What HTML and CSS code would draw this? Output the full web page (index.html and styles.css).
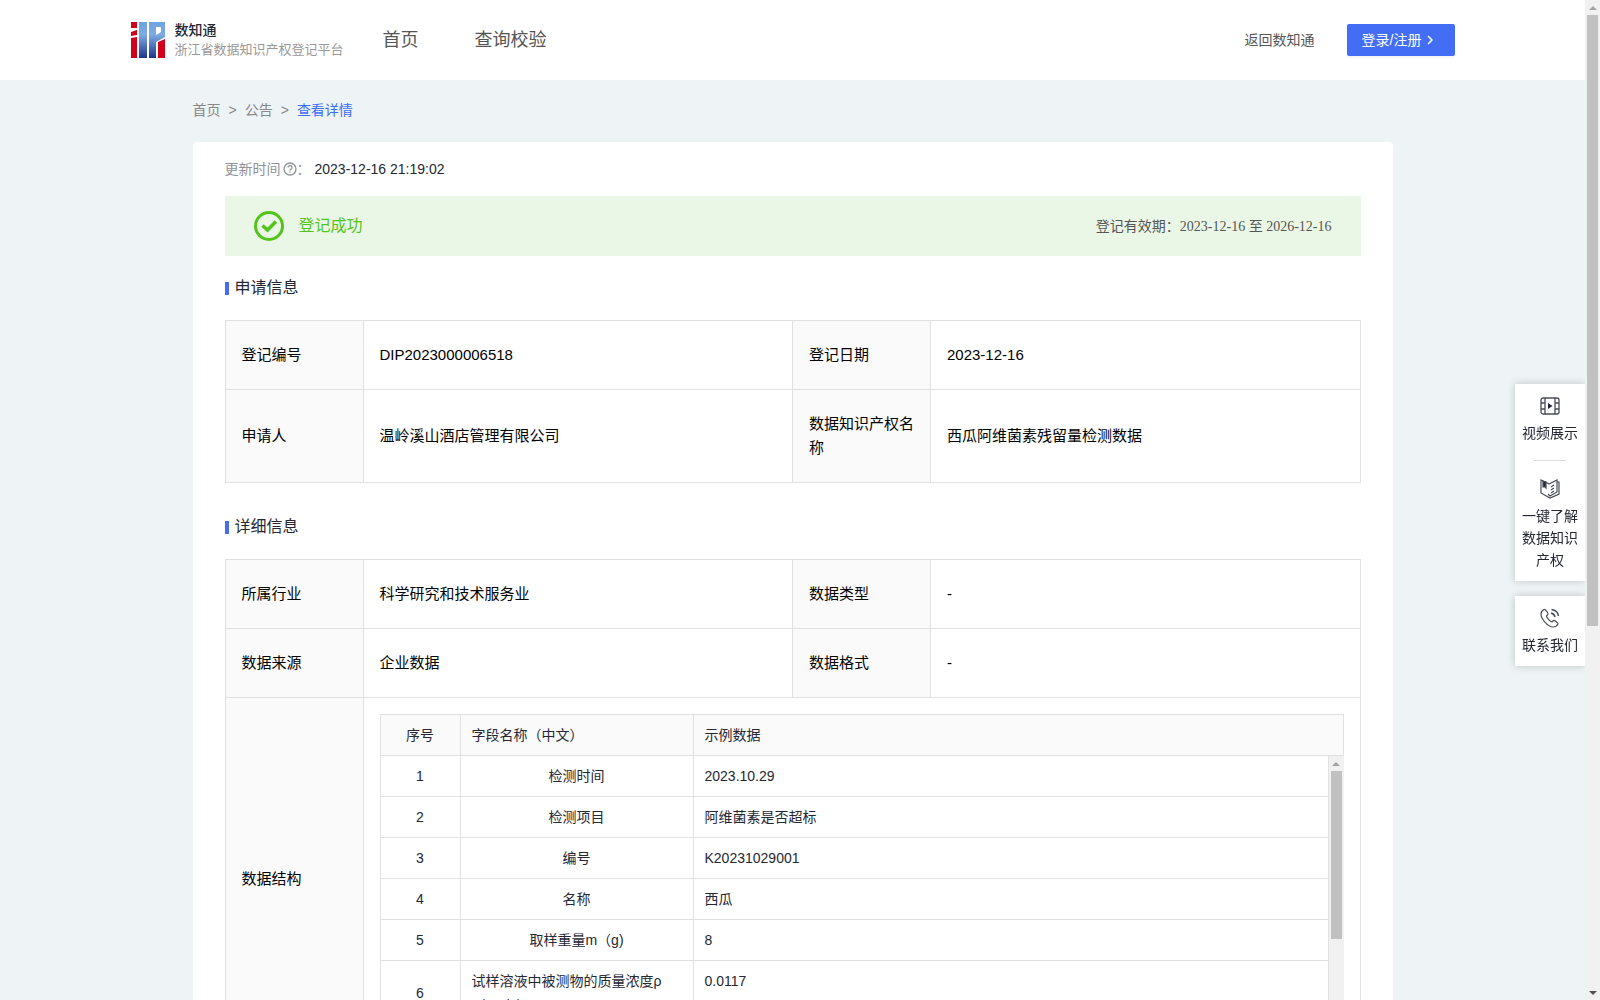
FILE: index.html
```html
<!DOCTYPE html>
<html lang="zh-CN">
<head>
  <meta charset="UTF-8">
  <title>浙江省数据知识产权登记平台</title>
  <link rel="stylesheet" href="styles.css">
</head>
<body>
  <!-- Header -->
  <header class="header">
    <div class="header-inner">
      <a class="logo" href="#">
        <svg width="34" height="36" viewBox="0 0 34 36">
          <defs>
            <linearGradient id="blue" x1="0" y1="0" x2="0" y2="1">
              <stop offset="0" stop-color="#6da3e0"/>
              <stop offset="0.35" stop-color="#7fabe2"/>
              <stop offset="1" stop-color="#1f3487"/>
            </linearGradient>
          </defs>
          <path fill="#d0021b" d="M0 0h6v6H0zM0 10l6-2v5l-6 1zM0 16l6-1v21H0zM34 17v19h-7V20z"/>
          <path fill="url(#blue)" fill-rule="evenodd" d="M8 0h8v36H8zM18 0h16v15l-9 5v16h-7zM25 5v8l5-3V5z"/>
        </svg>
        <span class="logo-text">
          <strong>数知通</strong>
          <small>浙江省数据知识产权登记平台</small>
        </span>
      </a>
      <nav class="nav">
        <a href="#">首页</a>
        <a href="#">查询校验</a>
      </nav>
      <a class="back" href="#">返回数知通</a>
      <button class="login" type="button">
        登录/注册
        <svg width="8" height="10" viewBox="0 0 8 10"><path d="M2 1l4 4-4 4" fill="none" stroke="#fff" stroke-width="1.500"/></svg>
      </button>
    </div>
  </header>

  <main class="container">
    <nav class="breadcrumb">
      <a href="#">首页</a><span>&gt;</span><a href="#">公告</a><span>&gt;</span><a class="current" href="#">查看详情</a>
    </nav>

    <div class="card">
      <div class="update">
        更新时间<svg width="14" height="14" viewBox="0 0 14 14" fill="none" stroke="#909399" stroke-width="1.300"><circle cx="7" cy="7" r="6"/><path d="M5 5.600a2 2 0 1 1 2.700 1.800c-.5.200-.7.500-.7 1.100M7 9.500v1.200"/></svg>：<span>2023-12-16 21:19:02</span>
      </div>

      <!-- Status -->
      <div class="status">
        <svg width="30" height="30" viewBox="0 0 30 30" fill="none" stroke="#52c41a"><circle cx="15" cy="15" r="13.500" stroke-width="3"/><path d="M8.500 14.500l5 4.500 8.500-8.500" stroke-width="3.500"/></svg>
        <span class="status-text">登记成功</span>
        <span class="valid">登记有效期：<span>2023-12-16 至 2026-12-16</span></span>
      </div>

      <!-- Application info -->
      <h2>申请信息</h2>
      <table class="info">
        <tr>
          <th>登记编号</th><td>DIP2023000006518</td>
          <th>登记日期</th><td>2023-12-16</td>
        </tr>
        <tr>
          <th>申请人</th><td>温岭溪山酒店管理有限公司</td>
          <th>数据知识产权名称</th><td>西瓜阿维菌素残留量检测数据</td>
        </tr>
      </table>

      <!-- Detail info -->
      <h2>详细信息</h2>
      <table class="info">
        <tr>
          <th>所属行业</th><td>科学研究和技术服务业</td>
          <th>数据类型</th><td>-</td>
        </tr>
        <tr>
          <th>数据来源</th><td>企业数据</td>
          <th>数据格式</th><td>-</td>
        </tr>
        <tr>
          <th>数据结构</th>
          <td class="nested" colspan="3">
            <div class="fields">
              <table>
                <tr><th class="no">序号</th><th class="field">字段名称（中文）</th><th>示例数据</th></tr>
              </table>
              <div class="fields-main">
                <div class="fields-scroll">
                  <table class="fields-body">
                    <tr><td class="no">1</td><td class="field"><span>检测时间</span></td><td>2023.10.29</td></tr>
                    <tr><td class="no">2</td><td class="field"><span>检测项目</span></td><td>阿维菌素是否超标</td></tr>
                    <tr><td class="no">3</td><td class="field"><span>编号</span></td><td>K20231029001</td></tr>
                    <tr><td class="no">4</td><td class="field"><span>名称</span></td><td>西瓜</td></tr>
                    <tr><td class="no">5</td><td class="field"><span>取样重量m（g)</span></td><td>8</td></tr>
                    <tr class="tall"><td class="no">6</td><td class="field"><span>试样溶液中被测物的质量浓度ρ（mg/L）</span></td><td>0.0117</td></tr>
                  </table>
                </div>
                <div class="scrollbar">
                  <i class="up"></i>
                  <div class="track"><div class="thumb" style="height: 65%"></div></div>
                  <i class="down"></i>
                </div>
              </div>
            </div>
          </td>
        </tr>
      </table>
    </div>
  </main>

  <!-- Floating side bar -->
  <aside class="side">
    <div class="side-box">
      <a href="#">
        <svg width="20" height="20" viewBox="0 0 20 20" fill="none" stroke="#4a4c56" stroke-width="1.300"><rect x="1" y="2" width="18" height="16" rx="2"/><path d="M5 2v16M15 2v16M1 7h4M1 13h4M15 7h4M15 13h4"/><path d="M8 7l4.500 3L8 13z" fill="#252733" stroke="none"/></svg>
        视频展示
      </a>
      <hr>
      <a href="#">
        <svg width="20" height="20" viewBox="0 0 20 20" fill="none" stroke="#4a4c56" stroke-width="1.200"><path d="M9 5L1 1v13l9 5 9-4V3h-2M9 5l8-4v12l-7 4-2-2M11 8l3-2M11 11l3-2M11 14l3-2"/><path d="M3 2l3 1v6L5 8 3 8z" fill="#252733"/></svg>
        一键了解数据知识产权
      </a>
    </div>
    <div class="side-box">
      <a href="#">
        <svg width="20" height="20" viewBox="0 0 20 20" fill="none" stroke="#4a4c56" stroke-width="1.200"><path d="M4 1.500C2 2.500 1 4 1 6c0 5 7 13 12 13 2 0 4-1 5-3 .4-1-3.500-4-4.500-3.500L12 14c-1.500 0-5.500-4.500-5.500-6L8 6.500C8.500 5.500 5.500 1 4 1.500z"/><path d="M11 5c2 .4 3.600 2 4 4M11.500 1.500c4 .5 6.500 3 7 6.500" stroke-width="1.500"/></svg>
        联系我们
      </a>
    </div>
  </aside>

  <div class="scrollbar page-scrollbar">
    <i class="up"></i>
    <div class="track"><div class="thumb" style="height: 63%"></div></div>
    <i class="down"></i>
  </div>
</body>
</html>
```

FILE: styles.css
```css
* {
  box-sizing: border-box;
}
html {
  scrollbar-width: none;
}
body {
  margin: 0;
  padding-right: 15px;
  background: #eef3f6;
  color: #252733;
  font-family: "Liberation Sans", "Noto Sans CJK SC", sans-serif;
  font-size: 14px;
  line-height: 24px;
}
a {
  color: inherit;
  text-decoration: none;
}

/* scrollbars */
.scrollbar {
  display: flex;
  flex-direction: column;
  flex: none;
  width: 15px;
  background: #f1f1f1;
}
.scrollbar .track {
  flex: 1;
  padding: 0 2px;
}
.scrollbar .thumb {
  background: #c1c1c1;
}
.scrollbar .up,
.scrollbar .down {
  display: flex;
  align-items: center;
  justify-content: center;
  height: 15px;
}
.scrollbar .up::before,
.scrollbar .down::before {
  content: "";
  border: 4px solid transparent;
}
.scrollbar .up::before {
  border-top: none;
  border-bottom-color: #a3a3a3;
}
.scrollbar .down::before {
  border-bottom: none;
  border-top-color: #505050;
}
.page-scrollbar {
  position: fixed;
  top: 0;
  right: 0;
  bottom: 0;
}

/* header */
.header {
  margin-right: -15px;
  padding-right: 15px;
  background: #fff;
}
.header-inner {
  display: flex;
  align-items: center;
  max-width: 1324px;
  height: 80px;
  margin: 0 auto;
}
.logo {
  display: flex;
  align-items: center;
  gap: 10px;
  width: 252px;
}
.logo-text strong,
.logo-text small {
  display: block;
  line-height: 20px;
}
.logo-text strong {
  font-size: 14px;
  font-weight: 500;
}
.logo-text small {
  color: #999;
  font-size: 13px;
}
.nav {
  display: flex;
  gap: 56px;
  color: #555;
  font-size: 18px;
}
.back {
  margin-left: auto;
  margin-right: 32px;
  color: #555;
}
.login {
  display: flex;
  align-items: center;
  gap: 5px;
  width: 108px;
  height: 32px;
  padding: 0 15px;
  border: none;
  border-radius: 2px;
  background: #446df6;
  box-shadow: 0 2px 0 rgba(0, 0, 0, 0.04);
  color: #fff;
  font: inherit;
  white-space: nowrap;
  cursor: pointer;
}

/* content */
.container {
  max-width: 1200px;
  margin: 0 auto;
}
.breadcrumb {
  padding: 18px 0 20px;
  color: #888;
}
.breadcrumb span {
  margin: 0 8px;
}
.breadcrumb .current {
  color: #3d6cf5;
}
.card {
  padding: 16px 32px 32px;
  border-radius: 4px;
  background: #fff;
}
.update {
  display: flex;
  align-items: center;
  height: 22px;
  color: #909399;
}
.update svg {
  margin-left: 2px;
}
.update span {
  margin-left: 4px;
  color: #252733;
}
.status {
  display: flex;
  align-items: center;
  height: 60px;
  margin-top: 16px;
  padding: 0 29px;
  background: #ebf7e6;
}
.status-text {
  margin-left: 15px;
  color: #52c41a;
  font-size: 16px;
}
.valid {
  margin-left: auto;
  color: #555;
}
.valid span {
  font-family: "Liberation Serif", "Noto Sans CJK SC", serif;
}
h2 {
  display: flex;
  align-items: center;
  gap: 6px;
  height: 24px;
  margin: 20px 0;
  font-size: 16px;
  font-weight: normal;
}
h2::before {
  content: "";
  width: 4px;
  height: 13px;
  background: #446df6;
}

/* tables */
table {
  width: 100%;
  border-collapse: collapse;
  table-layout: fixed;
}
th,
td {
  border: 1px solid #e1e1e1;
  font-weight: normal;
  text-align: left;
}
th {
  background: #fafafa;
}
.info {
  margin-bottom: 32px;
  color: #000;
  font-size: 15px;
}
.info > tbody > tr > th,
.info > tbody > tr > td {
  padding: 22px 16px;
}
.info > tbody > tr > th {
  width: 138px;
}
.info > tbody > tr > .nested {
  padding: 16px;
}
.fields {
  color: #252733;
  font-size: 14px;
}
.fields th,
.fields td {
  padding: 8px 11px;
}
.fields .no {
  width: 80px;
  text-align: center;
}
.fields .field {
  width: 233px;
}
.fields td.field {
  text-align: center;
}
.fields td.field span {
  display: inline-block;
  text-align: left;
}
.fields-main {
  display: flex;
  height: 288px;
}
.fields-scroll {
  flex: 1;
  overflow-y: auto;
  scrollbar-width: none;
}
.fields-body tr:first-child td {
  border-top: none;
}
.fields-body .tall td {
  vertical-align: top;
}
.fields-body .tall .no {
  vertical-align: middle;
}

/* side bar */
.side {
  position: fixed;
  top: 384px;
  right: 15px;
  width: 70px;
}
.side-box {
  margin-bottom: 15px;
  padding: 12px 6px 10px;
  background: #fff;
  box-shadow: 0 0 8px rgba(0, 0, 0, 0.2);
  line-height: 22px;
  text-align: center;
}
.side-box a,
.side-box svg {
  display: block;
}
.side-box svg {
  margin: 0 auto 6px;
}
.side-box hr {
  width: 32px;
  margin: 16px auto 18px;
  border: none;
  border-top: 1px solid #ddd;
}
```
